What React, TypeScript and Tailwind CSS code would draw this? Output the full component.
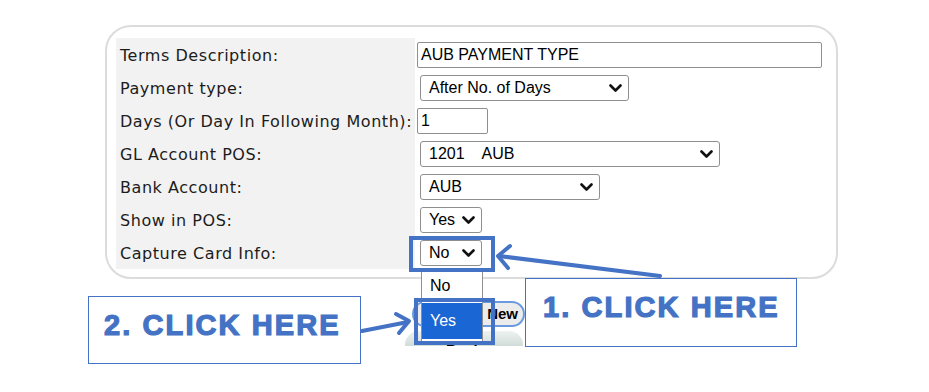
import React from "react";

const Chevron = () => (
  <svg width="13" height="9" viewBox="0 0 13 9" className="shrink-0">
    <polyline points="1.5,1.5 6.5,6.5 11.5,1.5" fill="none" stroke="#111" strokeWidth="2.6" strokeLinecap="round" strokeLinejoin="round" />
  </svg>
);

const Select = ({ value, w }: { value: string; w: string }) => (
  <div className={`${w} ml-[5px] h-[26px] flex items-center justify-between pl-[8px] pr-[6px] border border-[#8f8f8f] rounded-[3px] bg-white text-[16px] text-black whitespace-pre`}>
    <span>{value}</span>
    <Chevron />
  </div>
);

const TextBox = ({ value, w }: { value: string; w: string }) => (
  <div className={`${w} ml-[2px] h-[26px] flex items-center px-[3px] border border-[#8f8f8f] rounded-[2px] bg-white text-[16px] text-black`}>
    {value}
  </div>
);

const rows: { label: string; field: React.ReactNode }[] = [
  { label: "Terms Description:", field: <TextBox value="AUB PAYMENT TYPE" w="w-[405px]" /> },
  { label: "Payment type:", field: <Select value="After No. of Days" w="w-[209px]" /> },
  { label: "Days (Or Day In Following Month):", field: <TextBox value="1" w="w-[71px]" /> },
  { label: "GL Account POS:", field: <Select value="1201    AUB" w="w-[300px]" /> },
  { label: "Bank Account:", field: <Select value="AUB" w="w-[180px]" /> },
  { label: "Show in POS:", field: <Select value="Yes" w="w-[62px]" /> },
  { label: "Capture Card Info:", field: <Select value="No" w="w-[62px]" /> },
];

export default function App() {
  return (
    <div className="relative w-[929px] h-[392px] bg-white overflow-hidden font-['Liberation_Sans',Arial,sans-serif]">
      <div className="pl-[105px] pt-[25px]">
        <div className="w-[733px] h-[254px] border-2 border-[#dcdcdc] rounded-[26px] pt-[11px] pl-[9px]">
          <div className="grid grid-cols-[299px_1fr]">
            {rows.map((r) => (
              <React.Fragment key={r.label}>
                <div className="h-[33px] bg-[#f2f2f2] flex items-center pl-[4px] pt-[2px] text-[16px] tracking-[0.55px] text-[#1c1c1c] font-['DejaVu_Sans',Verdana,sans-serif] whitespace-nowrap">
                  {r.label}
                </div>
                <div className="h-[33px] flex items-center pt-[1px]">{r.field}</div>
              </React.Fragment>
            ))}
          </div>
        </div>

        {/* buttons under the panel, mostly hidden by the open list */}
        <div className="ml-[307px] mt-[22px] flex flex-col gap-[4px]">
          <div className="w-[113px] h-[26px] rounded-[13px] border-2 border-[#6a9be0] bg-[#ececec] flex items-center justify-end pr-[5px] text-[15px] font-bold text-black">
            Add New
          </div>
          <div className="w-[118px] h-[15px] overflow-hidden -ml-[7px]">
            <div className="h-[30px] rounded-[14px] bg-gradient-to-b from-[#eef3f1] to-[#b3c6bf] flex justify-center pt-[8px] text-[15px] font-bold text-black">
              Back
            </div>
          </div>
        </div>
      </div>

      {/* open dropdown list */}
      <div className="absolute left-[421px] top-[268px] w-[62px] h-[76px] border border-[#8f8f8f] bg-white flex flex-col text-[16px]">
        <div className="h-[34px] flex items-center pl-[8px] text-black">No</div>
        <div className="h-[36px] flex items-center pl-[8px] bg-[#1a66d4] text-white">Yes</div>
      </div>

      {/* highlight boxes */}
      <div className="absolute left-[409px] top-[236px] w-[86px] h-[36px] border-[4px] border-[#4472c4]" />
      <div className="absolute left-[414px] top-[298px] w-[81px] h-[47px] border-[4px] border-[#4472c4]" />

      {/* arrows */}
      <svg className="absolute left-0 top-0" width="929" height="392">
        <g stroke="#4472c4" strokeWidth="4" fill="none" strokeLinecap="round" strokeLinejoin="round">
          <line x1="660" y1="276" x2="499" y2="256" />
          <polyline points="510,246 498,256 508,268" />
          <line x1="362" y1="331" x2="408" y2="322" />
          <polyline points="396,314 409,321 399,333" />
        </g>
      </svg>

      {/* callouts */}
      <div className="absolute left-[525px] top-[278px] w-[272px] h-[69px] border border-[#4472c4] bg-white flex items-center pl-[17px] pb-[9px]">
        <span className="text-[29px] font-bold tracking-[2.1px] text-[#4472c4] [-webkit-text-stroke:1.2px_#4472c4] whitespace-nowrap">
          1. CLICK HERE
        </span>
      </div>
      <div className="absolute left-[88px] top-[296px] w-[273px] h-[68px] border border-[#4472c4] bg-white flex items-center pl-[15px] pb-[9px]">
        <span className="text-[29px] font-bold tracking-[2.1px] text-[#4472c4] [-webkit-text-stroke:1.2px_#4472c4] whitespace-nowrap">
          2. CLICK HERE
        </span>
      </div>
    </div>
  );
}
